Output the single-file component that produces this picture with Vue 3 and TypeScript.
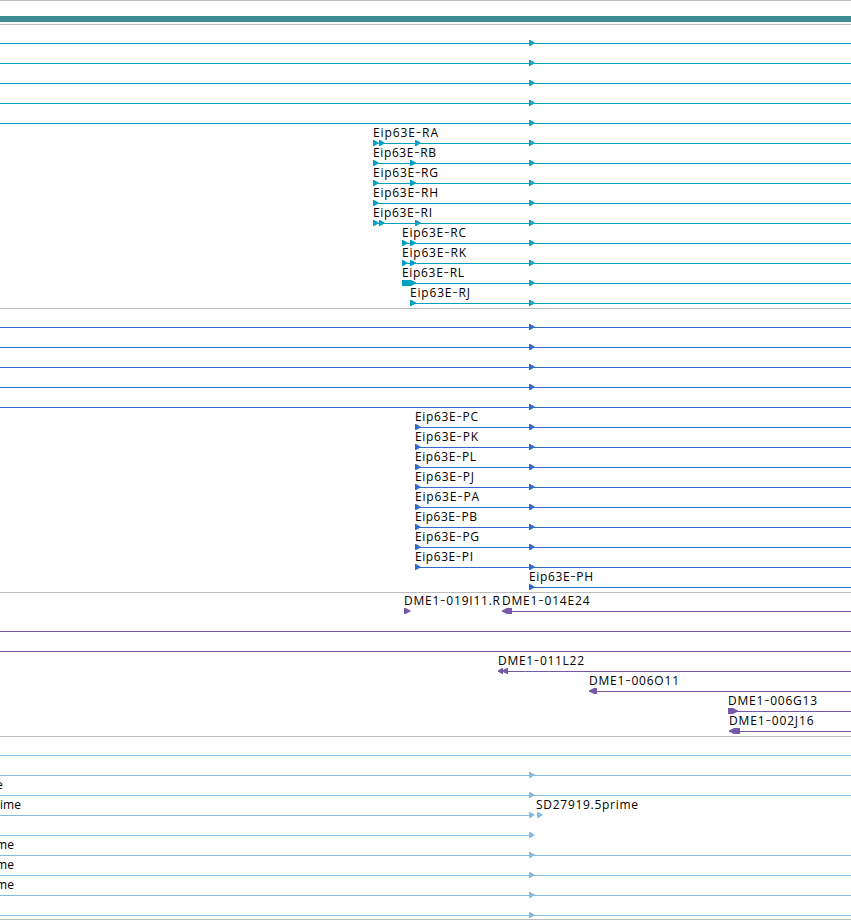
<script setup lang="ts">
// An exon spans x..end; `left` flips its arrow head to the reverse strand
interface Exon { x: number; end: number; left?: boolean }
interface Label { text: string; x: number; w: number }
interface Row { lines: [number, number][]; exons: Exon[]; labels: Label[] }
interface Track { name: string; rows: Row[] }

const WIDTH = 851
const SPLICE = 529

const exon = (x: number, end = x + 5.5, left = false): Exon => ({ x, end, left })

const row = (start: number, exons: Exon[] = [], labels: Label[] = [], end = WIDTH): Row => ({
  lines: start < end ? [[start, end]] : [],
  exons,
  labels,
})

const label = (text: string, x: number, end: number): Label => ({ text, x, w: end - x })

const through = (n: number): Row[] => Array.from({ length: n }, () => row(0, [exon(SPLICE)]))

const gene = (text: string, x: number, end: number, exons: Exon[]): Row =>
  row(x, [...exons, exon(SPLICE)], [label(text, x, end)])

const tracks: Track[] = [
  {
    name: 'transcript',
    rows: [
      ...through(5),
      gene('Eip63E-RA', 373, 438, [exon(373), exon(379), exon(415)]),
      gene('Eip63E-RB', 373, 436, [exon(373), exon(410, 416)]),
      gene('Eip63E-RG', 373, 438, [exon(373), exon(410, 416)]),
      gene('Eip63E-RH', 373, 438, [exon(373)]),
      gene('Eip63E-RI', 373, 432, [exon(373), exon(379), exon(415)]),
      gene('Eip63E-RC', 402, 466, [exon(402), exon(410, 416)]),
      gene('Eip63E-RK', 402, 466, [exon(402), exon(410, 416)]),
      gene('Eip63E-RL', 402, 464, [exon(402, 416)]),
      gene('Eip63E-RJ', 410, 470, [exon(410, 416)]),
    ],
  },
  {
    name: 'protein',
    rows: [
      ...through(5),
      gene('Eip63E-PC', 415, 478, [exon(415)]),
      gene('Eip63E-PK', 415, 478, [exon(415)]),
      gene('Eip63E-PL', 415, 476, [exon(415)]),
      gene('Eip63E-PJ', 415, 474, [exon(415)]),
      gene('Eip63E-PA', 415, 479, [exon(415)]),
      gene('Eip63E-PB', 415, 477, [exon(415)]),
      gene('Eip63E-PG', 415, 479, [exon(415)]),
      gene('Eip63E-PI', 415, 473, [exon(415)]),
      gene('Eip63E-PH', SPLICE, 593, []),
    ],
  },
  {
    name: 'clone',
    rows: [
      row(502, [exon(404, 410.5), exon(502, 512, true)], [
        label('DME1-019I11.R', 404, 500),
        label('DME1-014E24', 502, 589.5),
      ]),
      row(0),
      row(0),
      row(498, [exon(498, 503, true), exon(502, 508, true)], [label('DME1-011L22', 498, 584)]),
      row(589, [exon(589, 597, true)], [label('DME1-006O11', 589, 679)]),
      row(728, [exon(728, 738)], [label('DME1-006G13', 728, 817)]),
      row(729, [exon(729, 740, true)], [label('DME1-002J16', 729, 813.5)]),
    ],
  },
  {
    name: 'est',
    rows: [
      row(0),
      row(0, [exon(SPLICE)]),
      row(0, [exon(SPLICE)], [label('e', -4, 3)]),
      row(0, [exon(SPLICE), exon(537)], [label('ime', 0, 21), label('SD27919.5prime', 536, 638)], 534),
      row(0, [exon(SPLICE)], [], 534),
      row(0, [exon(SPLICE)], [label('me', -4, 14)]),
      row(0, [exon(SPLICE)], [label('me', -4, 14)]),
      row(0, [exon(SPLICE)], [label('me', -4, 14)]),
      row(0, [exon(SPLICE)]),
    ],
  },
]

function shape({ x, end, left }: Exon): string {
  const head = Math.min(5, end - x - 1)
  return left
    ? `M${end} 14H${x + head}L${x} 16.5V17.5L${x + head} 20H${end}Z`
    : `M${x} 14H${end - head}L${end} 16.5V17.5L${end - head} 20H${x}Z`
}

// Splits a name around its hyphen, which is drawn wider than the font's own
const parts = (text: string): string[] => text.split(/(-)/)
</script>

<template>
  <main class="viewer">
    <div class="contig"></div>
    <section v-for="track in tracks" :key="track.name" class="track" :class="track.name">
      <svg v-for="(r, i) in track.rows" :key="i" class="row" width="851" height="20" viewBox="0 0 851 20">
        <rect v-for="(l, j) in r.lines" :key="'l' + j" :x="l[0]" y="17" :width="l[1] - l[0]" height="1" />
        <path v-for="(e, j) in r.exons" :key="'e' + j" :d="shape(e)" />
        <text
          v-for="t in r.labels"
          :key="t.text"
          :x="t.x"
          y="11"
          :textLength="t.w"
          lengthAdjust="spacing"
        ><tspan v-for="(p, k) in parts(t.text)" :key="k" :class="{ dash: p === '-' }">{{ p }}</tspan></text>
      </svg>
    </section>
  </main>
</template>

<style>
body {
  background: #fff;
  overflow: hidden;
}
</style>

<style scoped>
.viewer {
  width: 851px;
  height: 920px;
  overflow: hidden;
  display: flex;
  flex-direction: column;
  background: #fff;
}
.contig {
  flex: none;
  height: 6px;
  padding: 15px 0 2px;
  border-top: 1px solid #bdbdbd;
  background: #3e8d94 content-box;
}
.track {
  flex: none;
  display: flex;
  flex-direction: column;
  padding: 1px 0 2px;
  border-top: 1px solid #bdbdbd;
}
.track:last-child {
  padding-bottom: 1px;
  border-bottom: 1px solid #bdbdbd;
}
.row {
  display: block;
  flex: none;
  overflow: visible;
}
.transcript { fill: #00a0c0; }
.protein { fill: #316bd1; }
.clone { fill: #7658a8; }
.est { fill: #86bcdf; }
text {
  fill: #000;
  font: 12px "Open Sans", "Noto Sans", sans-serif;
}
.dash {
  font-size: 17px;
  font-weight: 300;
}
</style>
